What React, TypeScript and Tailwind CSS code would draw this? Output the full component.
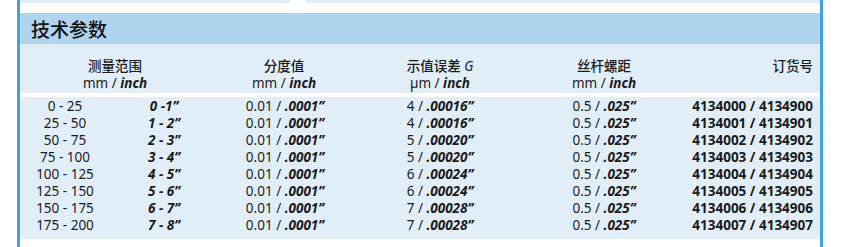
import React from 'react';

const rows = [
  { mm: '0 - 25', inch: '0 -1”', res: '.0001”', errMm: '4', errIn: '.00016”', pitch: '.025”', order: '4134000 / 4134900' },
  { mm: '25 - 50', inch: '1 - 2”', res: '.0001”', errMm: '4', errIn: '.00016”', pitch: '.025”', order: '4134001 / 4134901' },
  { mm: '50 - 75', inch: '2 - 3”', res: '.0001”', errMm: '5', errIn: '.00020”', pitch: '.025”', order: '4134002 / 4134902' },
  { mm: '75 - 100', inch: '3 - 4”', res: '.0001”', errMm: '5', errIn: '.00020”', pitch: '.025”', order: '4134003 / 4134903' },
  { mm: '100 - 125', inch: '4 - 5”', res: '.0001”', errMm: '6', errIn: '.00024”', pitch: '.025”', order: '4134004 / 4134904' },
  { mm: '125 - 150', inch: '5 - 6”', res: '.0001”', errMm: '6', errIn: '.00024”', pitch: '.025”', order: '4134005 / 4134905' },
  { mm: '150 - 175', inch: '6 - 7”', res: '.0001”', errMm: '7', errIn: '.00028”', pitch: '.025”', order: '4134006 / 4134906' },
  { mm: '175 - 200', inch: '7 - 8”', res: '.0001”', errMm: '7', errIn: '.00028”', pitch: '.025”', order: '4134007 / 4134907' },
];

const Unit = ({ prefix = 'mm' }: { prefix?: string }) => (
  <div>
    {prefix} / <span className="font-bold italic">inch</span>
  </div>
);

export default function App() {
  return (
    <div
      className="w-[847px] h-[247px] bg-white overflow-hidden text-[#1b1b1b]"
      style={{ fontFamily: '"Noto Sans", "Noto Sans CJK SC", sans-serif' }}
    >
      <div className="ml-[17px] w-[806px] h-full border-l-[3px] border-r-[3px] border-[#3fa4d8]">
        {/* top strip from previous block */}
        <div className="flex h-[3px]">
          <div className="w-[270px] bg-[#e2effa]" />
          <div className="w-[16px]" />
          <div className="flex-1 bg-[#e2effa]" />
        </div>

        <div className="mt-[10px] h-[31px] bg-[#b0d3ee] flex items-center pl-[11px] pt-[3px]">
          <h2 className="text-[19px] leading-none font-medium text-[#111]">技术参数</h2>
        </div>

        {/* header */}
        <div className="h-[49px] bg-[#e1eef8] flex pt-[14px] text-[13.5px] leading-[17px]">
          <div className="w-[190px] text-center">
            <div className="font-medium">测量范围</div>
            <Unit />
          </div>
          <div className="w-[148px] text-center">
            <div className="font-medium">分度值</div>
            <Unit />
          </div>
          <div className="w-[164px] text-center">
            <div className="font-medium">
              示值误差 <span className="italic font-normal">G</span>
            </div>
            <Unit prefix="µm" />
          </div>
          <div className="w-[164px] text-center">
            <div className="font-medium">丝杆螺距</div>
            <Unit />
          </div>
          <div className="w-[127px] text-right">
            <div className="font-medium">订货号</div>
          </div>
        </div>

        {/* body */}
        <div className="mt-[4px] bg-[#e1eef8] pt-[1px] pb-[5px] text-[13.5px]">
          {rows.map((r) => (
            <div key={r.order} className="flex h-[17px] items-center leading-[17px]">
              <div className="w-[90px] text-center">{r.mm}</div>
              <div className="w-[108px] text-center font-bold italic">{r.inch}</div>
              <div className="w-[134px] text-center">
                0.01 / <span className="font-bold italic">{r.res}</span>
              </div>
              <div className="w-[176px] text-center">
                {r.errMm} / <span className="font-bold italic">{r.errIn}</span>
              </div>
              <div className="w-[152px] text-center">
                0.5 / <span className="font-bold italic">{r.pitch}</span>
              </div>
              <div className="w-[133px] text-right font-bold">{r.order}</div>
            </div>
          ))}
        </div>
      </div>
    </div>
  );
}
